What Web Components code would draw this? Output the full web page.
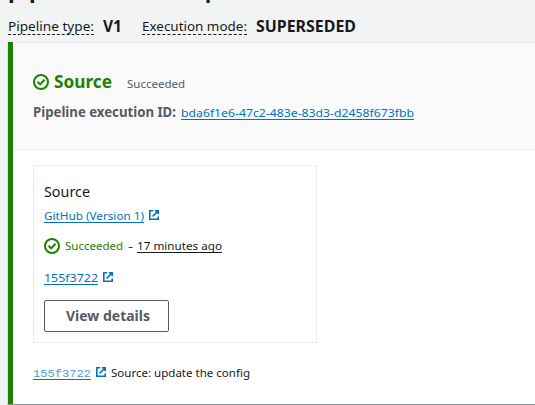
<!DOCTYPE html>
<html lang="en"><head><meta charset="utf-8"><title>Pipeline</title>
<style>
html,body{margin:0;width:535px;height:405px;overflow:hidden;background:#f2f3f3}
body{font-family:"Noto Sans","Liberation Sans",sans-serif;font-size:11.4px;color:#16191f}
</style></head><body>
<pipeline-page></pipeline-page>
<script>
const define=(name,html)=>customElements.define(name,class extends HTMLElement{
  constructor(){super();this.attachShadow({mode:'open'}).innerHTML=html;}
});
/* Text run: "w" gives its set width; the glyphs are stretched to it. */
customElements.define('text-run',class extends HTMLElement{
  connectedCallback(){
    if(this.shadowRoot)return;
    const r=this.attachShadow({mode:'open'});
    r.innerHTML='<style>:host{display:inline-block;white-space:nowrap;flex:none}span{display:inline-block;transform-origin:0 0;text-decoration:inherit;text-underline-offset:inherit;text-decoration-skip-ink:none;text-decoration-thickness:1px}</style><span><slot></slot></span>';
    const w=+this.getAttribute('w'),s=r.querySelector('span');
    const nat=s.getBoundingClientRect().width;
    s.style.transform='scaleX('+(w/nat)+')';
    this.style.width=w+'px';
  }
});
define('check-icon',`<style>:host{display:block;width:16px;height:16px;flex:none}svg{display:block}</style>
<svg width="16" height="16" viewBox="0 0 16 16" fill="none" stroke="#1d8102" stroke-width="2"><circle cx="8" cy="8" r="7"/><path d="M4.5 7.8l2.6 2.6 4.4-4.6"/></svg>`);
define('external-icon',`<style>:host{display:block;width:11px;height:11px;flex:none}svg{display:block}</style>
<svg width="11" height="11" viewBox="0 0 11 11" fill="none" stroke="#0073bb" stroke-width="1.6"><path d="M4.2.8H.8v8.4h8.4V6.4M5.8.8h3.4v3.4M9 1L3.6 6.4"/></svg>`);
define('page-heading',`<style>
:host{display:block;height:42px;box-sizing:border-box;padding-left:8px;overflow:hidden}
.title{height:14px;display:flex;gap:107px;font-size:22px;font-weight:700;line-height:30px}
.title text-run{margin-top:-26px}
.meta{display:flex;height:24px;line-height:24px;align-items:flex-start}
.label{font-size:13.4px;height:21px;border-bottom:1px dashed #16191f;box-sizing:border-box}
.value{font-size:16px;font-weight:700;margin-left:9px}
.second{margin-left:20px}
</style>
<div class="title"><text-run w="90">pipeline</text-run><text-run w="13">p</text-run></div>
<div class="meta"><text-run class="label" w="86">Pipeline type:</text-run><text-run class="value" w="19">V1</text-run>
<text-run class="label second" w="105">Execution mode:</text-run><text-run class="value" w="100">SUPERSEDED</text-run></div>`);
define('stage-header',`<style>
:host{display:block;box-sizing:border-box;height:108px;border-top:1px solid #eaeded;border-bottom:1px solid #eaeded;background:#fafafa;padding:23px 0 0 20px}
.name{display:flex;align-items:center;height:32px;color:#1d8102}
h2{margin:-2px 0 0 5px;font-size:18px;line-height:32px}
.status{margin:2px 0 0 15px;color:#545b64}
.exec{display:flex;height:30px;line-height:30px;color:#545b64}
b{font-size:13.4px;margin-top:-1px}
.id{margin-left:5px;color:#0073bb;text-decoration:underline;text-underline-offset:2px}
</style>
<div class="name"><check-icon></check-icon><h2><text-run w="58">Source</text-run></h2><text-run class="status" w="58">Succeeded</text-run></div>
<div class="exec"><b><text-run w="143">Pipeline execution ID:</text-run></b><text-run class="id" w="233">bda6f1e6-47c2-483e-83d3-d2458f673fbb</text-run></div>`);
define('action-card',`<style>
:host{display:block;box-sizing:border-box;width:284px;height:178px;border:1px solid #eaeded;padding:13px 10px 0;background:#fff}
.row{display:flex;line-height:20px;height:20px}
.link{color:#0073bb;text-decoration:underline;text-underline-offset:2px}
external-icon{margin:4px 0 0 5px}
.title{font-size:14.6px;height:27px;line-height:24px}
.state{margin-top:10px;align-items:flex-start}
.state check-icon{margin-top:2px}
.ok{margin-left:5px;color:#1d8102}.dash{margin-left:5px}
.time{margin-left:4px;text-decoration:underline;text-underline-offset:2px}
.rev{margin-top:12px}
button{display:block;box-sizing:border-box;margin:12px 0 0;width:125px;height:32px;border:1px solid #545b64;border-radius:2px;background:#fff;color:#545b64;font:700 13.4px/29px "Noto Sans",sans-serif;padding:0 1px 0 0}
</style>
<div class="row title"><text-run w="46">Source</text-run></div>
<div class="row"><text-run class="link" w="100">GitHub (Version 1)</text-run><external-icon></external-icon></div>
<div class="row state"><check-icon></check-icon><text-run class="ok" w="58">Succeeded</text-run><text-run class="dash" w="5">-</text-run><text-run class="time" w="85">17 minutes ago</text-run></div>
<div class="row rev"><text-run class="link" w="54">155f3722</text-run><external-icon></external-icon></div>
<button><text-run w="84">View details</text-run></button>`);
define('commit-line',`<style>
:host{display:flex;height:20px;line-height:20px;margin-top:20px}
.hash{font:10.8px/22px "Liberation Mono",monospace;color:#4ba0d2;text-decoration:underline;text-decoration-color:#0073bb;text-underline-offset:2px}
external-icon{margin:4px 4px 0 5px}
</style><text-run class="hash" w="58">155f3722</text-run><external-icon></external-icon><text-run w="139">Source: update the config</text-run>`);
define('stage-panel',`<style>
:host{display:block;box-sizing:border-box;height:363px;margin-left:7px;border-left:1px solid #e0e3e3;border-bottom:1px solid #879596;background:#fff}
.body{border-left:5px solid #1d8102;height:362px;box-sizing:border-box}
.content{padding:15px 0 0 20px}
</style><div class="body"><stage-header></stage-header><div class="content"><action-card></action-card><commit-line></commit-line></div></div>`);
define('pipeline-page',`<style>:host{display:block;width:535px;height:405px;overflow:hidden}</style><page-heading></page-heading><stage-panel></stage-panel>`);
</script></body></html>
